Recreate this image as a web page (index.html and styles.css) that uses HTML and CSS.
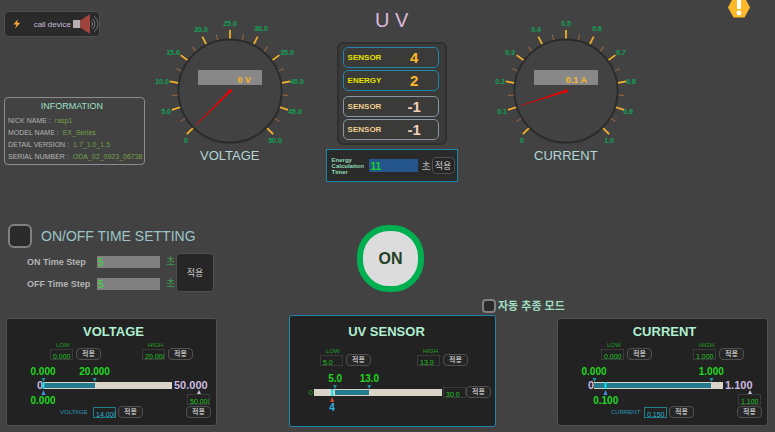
FILE: index.html
```
<!DOCTYPE html>
<html lang="ko">
<head>
<meta charset="utf-8">
<title>UV Monitor</title>
<link rel="stylesheet" href="styles.css">
</head>
<body>
<svg class="defs" aria-hidden="true">
  <defs>
    <path id="major" d="M0-61V-52.5" stroke="#f6b32a" stroke-width="1.7"/>
    <path id="minor" d="M0-58V-52.5" stroke="#a0683e" stroke-width="1"/>
    <g id="dial">
      <circle r="51.6" fill="none" stroke="#2b2b2b" stroke-width="2"/>
      <use href="#minor" transform="rotate(-121.5)"/><use href="#minor" transform="rotate(-94.5)"/>
      <use href="#minor" transform="rotate(-67.5)"/><use href="#minor" transform="rotate(-40.5)"/>
      <use href="#minor" transform="rotate(-13.5)"/><use href="#minor" transform="rotate(13.5)"/>
      <use href="#minor" transform="rotate(40.5)"/><use href="#minor" transform="rotate(67.5)"/>
      <use href="#minor" transform="rotate(94.5)"/><use href="#minor" transform="rotate(121.5)"/>
      <use href="#major" transform="rotate(-135)"/><use href="#major" transform="rotate(-108)"/>
      <use href="#major" transform="rotate(-81)"/><use href="#major" transform="rotate(-54)"/>
      <use href="#major" transform="rotate(-27)"/><use href="#major"/>
      <use href="#major" transform="rotate(27)"/><use href="#major" transform="rotate(54)"/>
      <use href="#major" transform="rotate(81)"/><use href="#major" transform="rotate(108)"/>
      <use href="#major" transform="rotate(135)"/>
      <rect x="-32" y="-21" width="64" height="15" fill="#888"/>
    </g>
    <g id="needle" fill="#f00000"><circle r="1.8"/><path d="M-1.1 0L-0.3-48H0.3L1.1 0Z"/></g>
  </defs>
</svg>

<header class="top">
  <div class="side">
    <button class="call" type="button">
      <svg class="bolt" viewBox="0 0 8 10"><path d="M5 0L0.5 5.6L3.5 5.6L2.2 10L7.5 3.8L4.4 3.8Z" fill="#f6a82c"/></svg>
      <span>call device</span>
      <svg class="speaker" viewBox="0 0 27 20"><path d="M1 6h7v8H1z" fill="#b5b0b0"/><path d="M8 6.500L18 0V20L8 13.500Z" fill="#a04440"/><path d="M19.500 7.500a3.500 3.500 0 0 1 0 5M20.500 5a6.500 6.500 0 0 1 0 10M22 2.500a9 9 0 0 1 0 15" fill="none" stroke="#757575" stroke-width="1"/></svg>
    </button>
    <section class="info">
      <h2>INFORMATION</h2>
      <dl>
        <div><dt>NICK NAME :</dt><dd>rasp1</dd></div>
        <div><dt>MODEL NAME :</dt><dd>EX_Series</dd></div>
        <div><dt>DETAIL VERSION :</dt><dd>1.7_1.0_1.5</dd></div>
        <div><dt>SERIAL NUMBER :</dt><dd>ODA_02_0923_06738</dd></div>
      </dl>
    </section>
  </div>

  <figure class="gauge">
    <svg viewBox="-80 -91 160 145">
      <use href="#dial"/>
      <g class="ticks">
        <text x="-44" y="52">0</text><text x="-64" y="23">5.0</text><text x="-68" y="-7">10.0</text>
        <text x="-57" y="-36">15.0</text><text x="-29" y="-59">20.0</text><text x="0" y="-65">25.0</text>
        <text x="31" y="-60">30.0</text><text x="57" y="-36">35.0</text><text x="67" y="-7">40.0</text>
        <text x="65" y="23">45.0</text><text x="45" y="52">50.0</text>
      </g>
      <text class="reading" x="21" y="-8">0 V</text>
      <use href="#needle" transform="rotate(-135)"/>
    </svg>
    <figcaption>VOLTAGE</figcaption>
  </figure>

  <section class="uv">
    <h1>U V</h1>
    <div class="readings">
      <div class="row live"><span>SENSOR</span><b>4</b></div>
      <div class="row live"><span>ENERGY</span><b>2</b></div>
      <div class="row idle"><span>SENSOR</span><b>-1</b></div>
      <div class="row idle"><span>SENSOR</span><b>-1</b></div>
    </div>
    <div class="timer">
      <label for="timer">Energy Calculation Timer</label>
      <input id="timer" value="11">
      <span class="unit">초</span>
      <button class="apply" type="button">적용</button>
    </div>
  </section>

  <figure class="gauge">
    <svg viewBox="-80 -91 160 145">
      <use href="#dial"/>
      <g class="ticks">
        <text x="-44" y="52">0</text><text x="-64" y="23">0.1</text><text x="-66" y="-7">0.2</text>
        <text x="-56" y="-36">0.3</text><text x="-30" y="-59">0.4</text><text x="0" y="-65">0.5</text>
        <text x="31" y="-60">0.6</text><text x="55" y="-36">0.7</text><text x="65" y="-7">0.8</text>
        <text x="62" y="23">0.9</text><text x="43" y="52">1.0</text>
      </g>
      <text class="reading" x="21" y="-8">0.1 A</text>
      <use href="#needle" transform="rotate(-108)"/>
    </svg>
    <figcaption>CURRENT</figcaption>
  </figure>

  <svg class="warning" viewBox="0 0 22 18" role="img" aria-label="Warning"><path d="M5.500-3H16.500L22 7.500L16.500 17.500H5.500L0 7.500Z" fill="#fbb829"/><path d="M9 0h4v9H9z" fill="#fff"/><circle cx="11" cy="13" r="2.400" fill="#fff"/></svg>
</header>

<section class="middle">
  <div class="schedule">
    <div class="heading">
      <input type="checkbox" id="schedule" class="tick large">
      <label for="schedule">ON/OFF TIME SETTING</label>
    </div>
    <div class="steps">
      <div class="fields">
        <label for="on-step">ON Time Step</label><input id="on-step" value="5"><span class="unit">초</span>
        <label for="off-step">OFF Time Step</label><input id="off-step" value="5"><span class="unit">초</span>
      </div>
      <button class="apply big" type="button">적용</button>
    </div>
  </div>
  <button class="power" type="button">ON</button>
  <div class="auto">
    <input type="checkbox" id="auto" class="tick">
    <label for="auto">자동 추종 모드</label>
  </div>
</section>

<main class="panels">
  <section class="panel voltage">
    <h2>VOLTAGE</h2>
    <div class="limits">
      <div class="limit"><label for="v-low">LOW</label><input id="v-low" value="0.000"><button class="apply" type="button">적용</button></div>
      <div class="limit"><label for="v-high">HIGH</label><input id="v-high" value="20.000"><button class="apply" type="button">적용</button></div>
    </div>
    <div class="scale">
      <span class="zero">0</span>
      <div class="track">
        <div class="fill" style="left:0%;width:40%"></div>
        <div class="mark low" style="left:0%">0.000</div>
        <div class="mark" style="left:40%">20.000</div>
        <div class="now" style="left:0%">0.000</div>
      </div>
      <span class="max">50.000</span>
    </div>
    <div class="foot">
      <div class="target"><label for="v-set">VOLTAGE</label><input id="v-set" value="14.000"><button class="apply" type="button">적용</button></div>
      <div class="range"><i class="up"></i><input aria-label="Voltage maximum" value="50.000"><button class="apply" type="button">적용</button></div>
    </div>
  </section>

  <section class="panel sensor">
    <h2>UV SENSOR</h2>
    <div class="limits">
      <div class="limit"><label for="s-low">LOW</label><input id="s-low" value="5.0"><button class="apply" type="button">적용</button></div>
      <div class="limit"><label for="s-high">HIGH</label><input id="s-high" value="13.0"><button class="apply" type="button">적용</button></div>
    </div>
    <div class="scale">
      <span class="zero">0</span>
      <div class="track">
        <div class="fill" style="left:16.6%;width:26.6%"></div>
        <div class="mark low" style="left:16.6%">5.0</div>
        <div class="mark" style="left:43.3%">13.0</div>
        <div class="now" style="left:14%">4</div>
      </div>
      <div class="range"><input aria-label="Sensor maximum" value="30.0"><button class="apply" type="button">적용</button></div>
    </div>
  </section>

  <section class="panel current">
    <h2>CURRENT</h2>
    <div class="limits">
      <div class="limit"><label for="c-low">LOW</label><input id="c-low" value="0.000"><button class="apply" type="button">적용</button></div>
      <div class="limit"><label for="c-high">HIGH</label><input id="c-high" value="1.000"><button class="apply" type="button">적용</button></div>
    </div>
    <div class="scale">
      <span class="zero">0</span>
      <div class="track">
        <div class="fill" style="left:0%;width:90.9%"></div>
        <div class="mark low" style="left:0%">0.000</div>
        <div class="mark" style="left:90.9%">1.000</div>
        <div class="now" style="left:9.1%">0.100</div>
      </div>
      <span class="max">1.100</span>
    </div>
    <div class="foot">
      <div class="target"><label for="c-set">CURRENT</label><input id="c-set" value="0.150"><button class="apply" type="button">적용</button></div>
      <div class="range"><i class="up"></i><input aria-label="Current maximum" value="1.100"><button class="apply" type="button">적용</button></div>
    </div>
  </section>
</main>
</body>
</html>
```
FILE: styles.css
```
* { box-sizing: border-box; }
body {
  margin: 0;
  background: #424242;
  font-family: "Liberation Sans", "Noto Sans CJK KR", sans-serif;
  color: #b4b4b4;
}
h1, h2, dl, dd, figure { margin: 0; }
h1, h2 { font-weight: normal; }
button, input { font: inherit; margin: 0; padding: 0; min-width: 0; }
svg { display: block; }
.defs { position: absolute; width: 0; height: 0; }

/* top row */
.top {
  display: grid;
  grid-template-columns: 150fr 159fr 164fr 185fr 117fr;
}
.side { padding: 11px 5px 0 4px; }
.call {
  display: flex;
  align-items: center;
  width: 96px;
  height: 26px;
  padding: 0 0 0 8px;
  background: #2a2a2a;
  border: 1px solid #505050;
  border-radius: 4px;
  color: #c9b8dc;
  font-size: 8px;
}
.bolt { width: 8px; height: 10px; margin-right: 13px; }
.speaker { width: 27px; height: 20px; flex: none; }
.call span { white-space: nowrap; margin-right: 1px; }
.info {
  margin-top: 60px;
  padding: 2px 0 1px 3px;
  border: 1px solid #8c8c8c;
  border-radius: 4px;
  font-size: 7px;
  line-height: 12px;
}
.info h2 { margin-bottom: 3px; font-size: 9px; line-height: 12px; padding-right: 8px; text-align: center; color: #9fe0c4; }
.info dl div { display: flex; gap: 4px; white-space: nowrap; }
.info dd { color: #73a048; }

.gauge { display: flex; flex-direction: column; align-items: center; }
.gauge svg { width: 160px; height: 145px; }
.ticks { font-size: 7px; font-weight: bold; fill: #0fa457; text-anchor: middle; }
.reading { font-size: 9px; font-weight: bold; fill: #fbb72c; text-anchor: end; }
.gauge figcaption { margin-top: 3px; font-size: 13px; line-height: 16px; color: #b4d6d8; }

.uv { display: flex; flex-direction: column; align-items: center; padding-top: 8px; }
.uv h1 { font-size: 20px; line-height: 24px; color: #dab8dc; }
.readings {
  width: 110px;
  margin-top: 10px;
  padding: 3px 6px 3px 4px;
  display: grid;
  gap: 2px;
  background: #3a3a38;
  border: 2px solid #2f2f2f;
  border-radius: 6px;
}
.row {
  display: grid;
  grid-template-columns: 54px 1fr;
  align-items: center;
  height: 21px;
  padding: 0 11px 0 4px;
  border: 1px solid #1f86b0;
  border-radius: 5px;
  font-size: 8px;
  font-weight: bold;
}
.row b { font-size: 15px; text-align: center; }
.live { color: #e4e000; }
.live b { color: #fbb72c; }
.idle { border-color: #8896a6; color: #f0cd90; }
.idle b { color: #f4cfb8; }
.live + .idle { margin-top: 3px; }
.timer {
  display: flex;
  align-items: center;
  width: 132px;
  height: 33px;
  margin-top: 4px;
  padding: 0 2px 0 5px;
  background: #2a2a2a;
  border: 1px solid #1f86b0;
}
.timer label { width: 37px; font-size: 6px; line-height: 6px; font-weight: bold; color: #8fd8b4; }
.timer input {
  width: 50px;
  height: 13px;
  padding: 2px 0 0 2px;
  background: #24568c;
  border: 0;
  color: #10d820;
  font-size: 10px;
  line-height: 11px;
  font-weight: bold;
}
.timer .unit { margin: 0 1px 0 3px; font-size: 10px; }
.apply {
  width: 25px;
  height: 12px;
  background: #262626;
  border: 1px solid #505050;
  border-radius: 4px;
  color: #d0d0d0;
  font-size: 7px;
  line-height: 8px;
  white-space: nowrap;
}
.timer .apply { width: 23px; height: 17px; font-size: 9px; }
.warning { width: 22px; height: 18px; margin-left: 70px; }

/* middle row */
.middle {
  display: grid;
  grid-template-columns: 357fr 125fr 293fr;
  margin-top: 42px;
  min-height: 91px;
}
.schedule { padding-left: 8px; }
.heading { display: flex; align-items: center; gap: 9px; font-size: 14px; color: #9cc5c8; }
.tick {
  appearance: none;
  flex: none;
  width: 14px;
  height: 14px;
  margin: 0;
  background: #2a2a2a;
  border: 2px solid #808080;
  border-radius: 4px;
}
.tick.large { width: 24px; height: 24px; border-radius: 6px; }
.steps { display: flex; align-items: center; margin-top: 5px; padding-left: 19px; }
.fields {
  display: grid;
  grid-template-columns: 70px 63px 16px;
  row-gap: 10px;
  align-items: center;
  font-size: 9px;
}
.fields label { font-weight: bold; white-space: nowrap; line-height: 12px; }
.fields input {
  height: 12px;
  width: 100%;
  padding: 2px 0 0 1px;
  background: #808080;
  border: 0;
  color: #30e030;
  font-size: 10px;
  line-height: 10px;
}
.fields .unit { padding-left: 6px; font-size: 10px; line-height: 12px; color: #3f9a4a; }
.apply.big { width: 38px; height: 39px; font-size: 9px; }
.power {
  width: 67px;
  height: 67px;
  margin-top: 1px;
  background: #dcdcdc;
  border: 6px solid #00b050;
  border-radius: 32px;
  color: #1f4022;
  font-size: 16px;
  font-weight: bold;
}
.auto { display: flex; align-items: center; align-self: end; gap: 2px; height: 18px; font-size: 11px; color: #9fdcc0; }
.auto label { line-height: 14px; font-weight: bold; }

/* bottom panels */
.panels {
  display: grid;
  grid-template-columns: 211fr 72fr 207fr 61fr 211fr;
  align-items: end;
  padding: 0 7px 4px 6px;
}
.panel {
  margin-bottom: 1px;
  padding: 5px 0 7px;
  background: #222;
  border: 1px solid #505050;
  border-radius: 3px;
}
.voltage { grid-column: 1; }
.sensor { grid-column: 3; }
.current { grid-column: 5; }
.panel h2 { font-size: 13px; line-height: 16px; font-weight: bold; text-align: center; padding-left: 4px; color: #b0f0d0; }
.panel .apply { font-weight: bold; color: #b8b8b8; }
.limits { display: grid; grid-template-columns: 92fr 74fr; margin-top: 2px; padding-left: 43px; }
.limit {
  display: grid;
  grid-template-columns: 23px 25px;
  grid-template-rows: 6px 12px;
  column-gap: 3px;
  align-items: center;
  justify-content: start;
  font-size: 6px;
}
.limit label { grid-column: 1 / -1; padding-left: 6px; line-height: 6px; color: #20a020; }
.panel input {
  width: 23px;
  height: 11px;
  padding: 4px 0 0 2px;
  background: transparent;
  border: 1px solid #3a3a3a;
  color: #20c820;
  font-size: 7px;
  line-height: 8px;
}
.scale {
  display: grid;
  grid-template-columns: 36px 1fr 44px;
  align-items: center;
  height: 7px;
  margin-top: 22px;
  font-size: 11px;
  line-height: 7px;
  font-weight: bold;
  color: #cbbbe0;
}
.zero { text-align: right; }
.max { padding-left: 2px; }
.track { position: relative; height: 7px; background: #d8d4c8; }
.fill { position: absolute; top: 1px; bottom: 1px; background: #227a8c; }
.mark, .now {
  position: absolute;
  display: flex;
  flex-direction: column;
  align-items: center;
  transform: translateX(-50%);
  font-size: 10px;
  line-height: 10px;
  color: #20d820;
}
.mark { bottom: 7px; }
.mark::after { content: ""; border: 2px solid transparent; border-top: 4px solid #2090a0; border-bottom: 0; margin-top: 1px; }
.now { top: 0; line-height: 24px; }
.now::before { content: ""; width: 2px; height: 7px; background: #10e0f0; }
.now::after { content: ""; position: absolute; top: 8px; border: 2px solid transparent; border-bottom: 5px solid #4090f0; border-top: 0; }
.foot { display: flex; justify-content: space-between; align-items: end; margin-top: 1px; padding: 0 5px 0 53px; }
.target { display: flex; align-items: center; gap: 2px; }
.target label { width: 31px; font-size: 6px; color: #2d95b5; }
.target input { border-color: #1f8088; color: #30b0d0; }
.range { display: flex; flex-direction: column; align-items: center; font-weight: normal; }
.foot .range .apply { margin-top: 1px; }
.up { border: 2px solid transparent; border-bottom: 4px solid #c8c8d8; border-top: 0; }

.voltage, .current { margin-bottom: 2px; }
.sensor { padding-bottom: 33px; border-color: #1f86b0; }
.sensor h2 { padding: 3px 12px 0 0; }
.sensor .limits { margin-top: 8px; padding-left: 30px; }
.sensor .scale { grid-template-columns: 24px 1fr 53px; margin-top: 20px; }
.sensor .zero { font-size: 8px; font-weight: normal; color: #20a020; padding-right: 1px; }
.sensor .range { flex-direction: row; padding-left: 1px; }
.sensor .now { color: #30b0e8; }
.sensor .now::after { border-bottom-color: #d05030; }
```
